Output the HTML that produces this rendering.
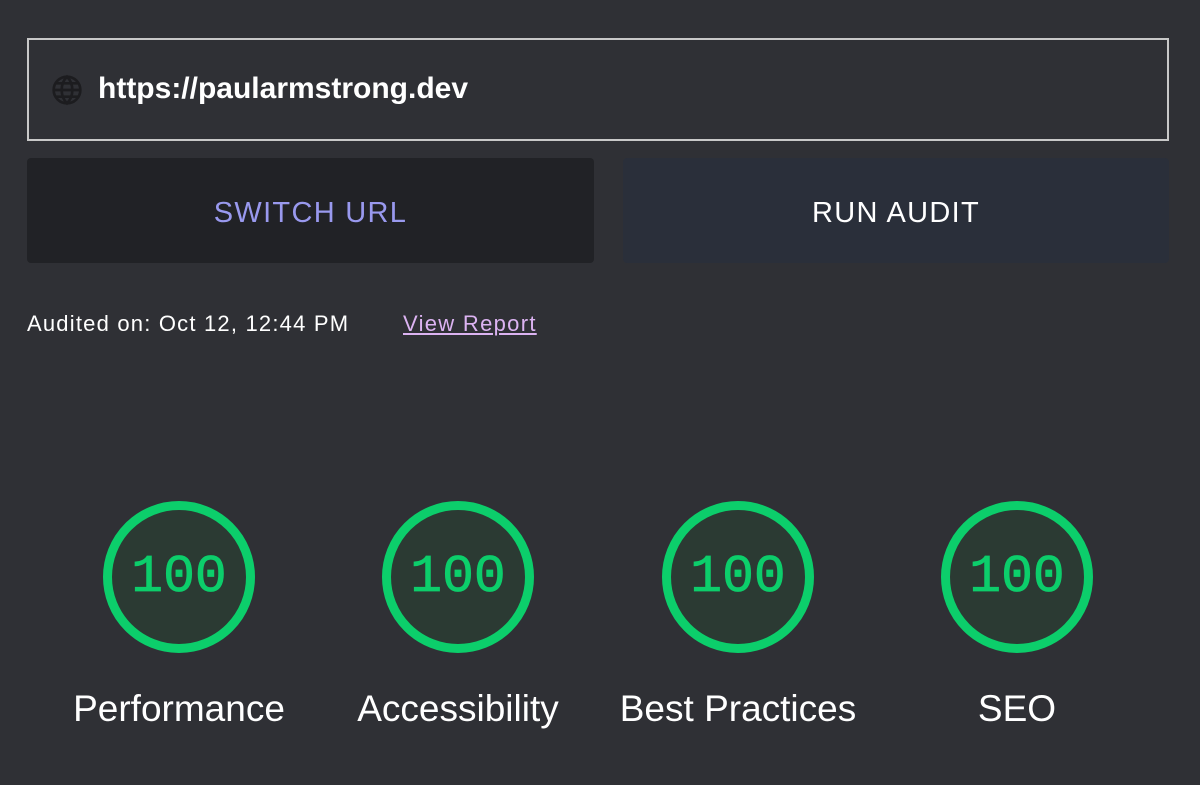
<!DOCTYPE html>
<html><head><style>
body{margin:0;width:1200px;height:785px;background:#2f3035;font-family:"Liberation Sans",sans-serif;color:#fff;position:relative;overflow:hidden}
.url{position:absolute;left:27px;top:38px;width:1142px;height:103px;border:2px solid #c8c8c8;box-sizing:border-box}
.url span{position:absolute;left:69px;top:32px;font-size:30px;font-weight:bold;letter-spacing:0px}
.url svg{position:absolute;left:22px;top:34px}
.btn{position:absolute;top:158px;height:105px;border-radius:4px;font-size:29px;display:flex;align-items:center;justify-content:center;letter-spacing:1.3px;padding-top:5px;box-sizing:border-box}
.b1{left:27px;width:567px;background:#212226;color:#9999ee}
.b2{left:623px;width:546px;background:#2a2f3a;color:#fff}
.aud{position:absolute;left:27px;top:311px;font-size:22px;letter-spacing:1.2px}
.vr{position:absolute;left:403px;top:311px;font-size:22px;letter-spacing:1.3px;color:#dcb3f2;text-decoration:underline}
.g{position:absolute;top:501px;width:152px;height:152px;border-radius:50%;border:9px solid #0cce6b;box-sizing:border-box;background:#2b3a33;color:#0cce6b;font-family:"Liberation Mono",monospace;font-size:53px;display:flex;align-items:center;justify-content:center;-webkit-text-stroke:0.8px #0cce6b}
.l{position:absolute;top:688px;width:300px;text-align:center;font-size:37px}
</style></head><body>
<div class="url"><svg width="32" height="32" viewBox="0 0 24 24" fill="none" stroke="#1c1c1f" stroke-width="2"><circle cx="12" cy="12" r="10"/><path d="M2 12h20M12 2c3 3 4 6.5 4 10s-1 7-4 10c-3-3-4-6.5-4-10s1-7 4-10zM4 7h16M4 17h16"/></svg><span>https://paularmstrong.dev</span></div>
<div class="btn b1">SWITCH URL</div>
<div class="btn b2">RUN AUDIT</div>
<div class="aud">Audited on: Oct 12, 12:44 PM</div>
<div class="vr">View Report</div>
<div class="g" style="left:103px">100</div>
<div class="g" style="left:382px">100</div>
<div class="g" style="left:662px">100</div>
<div class="g" style="left:941px">100</div>
<div class="l" style="left:29px">Performance</div>
<div class="l" style="left:308px">Accessibility</div>
<div class="l" style="left:588px">Best Practices</div>
<div class="l" style="left:867px">SEO</div>
</body></html>
